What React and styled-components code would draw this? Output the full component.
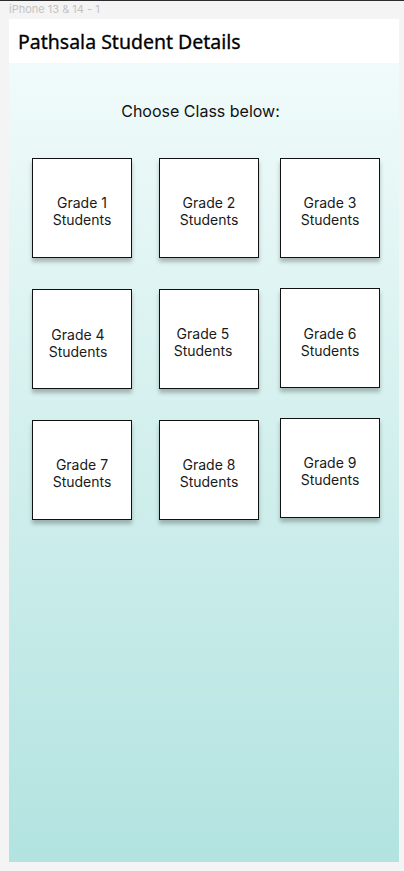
import React from "react";
import styled, { createGlobalStyle } from "styled-components";

const GlobalStyle = createGlobalStyle`
  html, body {
    margin: 0;
    padding: 0;
    background: #f4f4f4;
  }
  body {
    border-top: 1px solid #2c2c2c;
    min-height: 870px;
    font-family: Inter, "Liberation Sans", sans-serif;
  }
`;

const FrameLabel = styled.div`
  height: 18px;
  padding-left: 9px;
  font-family: Inter, "Liberation Sans", sans-serif;
  font-size: 11px;
  line-height: 16px;
  color: #c2c2c2;
`;

const Frame = styled.div`
  margin-left: 9px;
  width: 390px;
  display: flex;
  flex-direction: column;
`;

const Header = styled.header`
  height: 44px;
  background: #ffffff;
  display: flex;
  align-items: center;
  padding-left: 9px;
`;

const Title = styled.h1`
  margin: 0;
  font-family: "Noto Sans", "Open Sans", sans-serif;
  font-weight: 400;
  font-size: 19.5px;
  color: #000;
  -webkit-text-stroke: 0.3px #000;
`;

const Main = styled.main`
  height: 799px;
  background: linear-gradient(180deg, #f0fbfa 0%, #b2e3e0 100%);
  display: flex;
  flex-direction: column;
`;

const Prompt = styled.p`
  margin: 38px 0 0;
  padding-right: 7px;
  text-align: center;
  font-family: Inter, "Liberation Sans", sans-serif;
  font-size: 16px;
  line-height: 20px;
  color: #111;
`;

const Grid = styled.div`
  margin-top: 37px;
  padding-left: 23px;
  display: grid;
  grid-template-columns: repeat(3, 100px);
  column-gap: 24px;
  row-gap: 31px;
`;

const Card = styled.button`
  width: 100px;
  height: 100px;
  box-sizing: border-box;
  background: #ffffff;
  border: 1px solid #111;
  box-shadow: 0 4px 4px rgba(0, 0, 0, 0.25);
  margin-left: ${(p) => p.$dx || 0}px;
  margin-top: ${(p) => p.$dy || 0}px;
  padding: 0;
  display: flex;
  align-items: center;
  justify-content: center;
  cursor: pointer;
`;

const CardText = styled.span`
  font-family: Inter, "Liberation Sans", sans-serif;
  font-size: 14px;
  line-height: 17px;
  color: #1a1a1a;
  text-align: center;
  transform: translate(${(p) => p.$tx || 0}px, ${(p) => p.$ty || 0}px);
`;

const grades = [
  { n: 1, ty: 3 },
  { n: 2, dx: 3, ty: 3 },
  { n: 3, ty: 3 },
  { n: 4, tx: -4, ty: 4 },
  { n: 5, dx: 3, tx: -6, ty: 3 },
  { n: 6, dy: -1, ty: 4 },
  { n: 7, ty: 3 },
  { n: 8, dx: 3, ty: 3 },
  { n: 9, dy: -2, ty: 3 },
];

export default function App() {
  return (
    <>
      <GlobalStyle />
      <FrameLabel>iPhone 13 &amp; 14 - 1</FrameLabel>
      <Frame>
        <Header>
          <Title>Pathsala Student Details</Title>
        </Header>
        <Main>
          <Prompt>Choose Class below:</Prompt>
          <Grid>
            {grades.map((g) => (
              <Card key={g.n} $dx={g.dx} $dy={g.dy}>
                <CardText $tx={g.tx} $ty={g.ty}>
                  Grade {g.n}
                  <br />
                  Students
                </CardText>
              </Card>
            ))}
          </Grid>
        </Main>
      </Frame>
    </>
  );
}
